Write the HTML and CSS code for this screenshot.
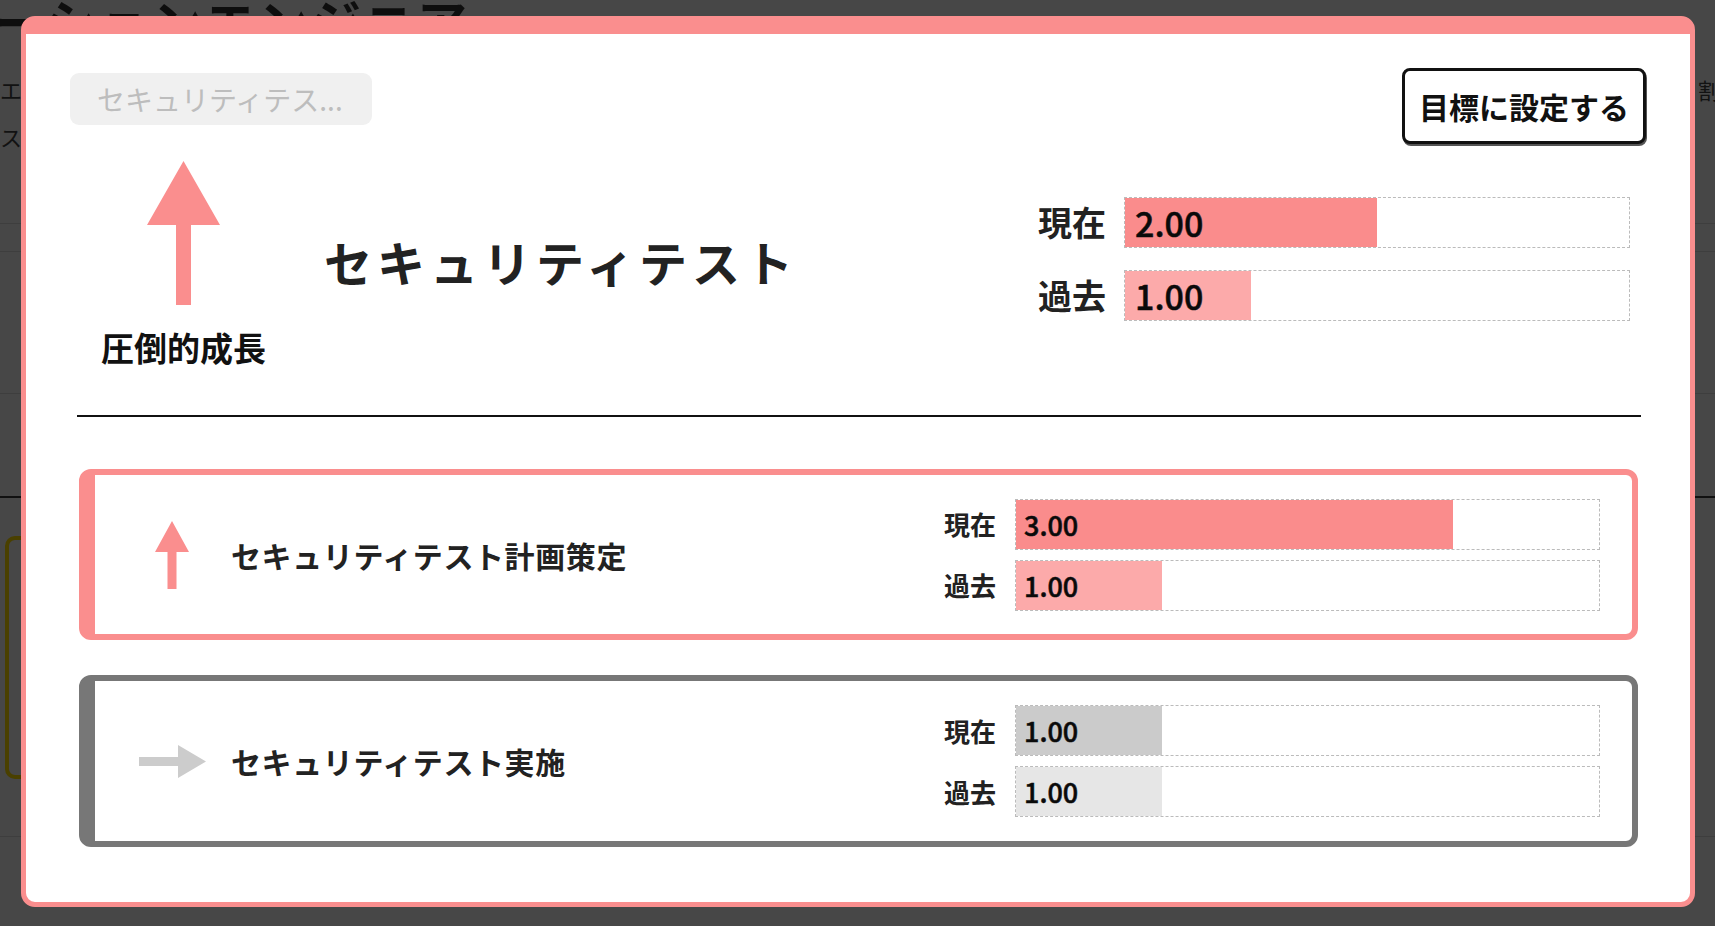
FILE: index.html
```html
<!DOCTYPE html>
<html lang="ja">
<head>
<meta charset="utf-8">
<title>セキュリティテスト</title>
<link rel="stylesheet" href="styles.css">
</head>
<body>
<div class="page">
  <h1 class="page-title">ーションエンジニア</h1>
  <div class="page-meta">
    <div class="meta-row"><span>エ</span><span class="meta-right">割合</span></div>
    <div class="meta-row"><span>ス</span></div>
  </div>
  <div class="band band-a"></div>
  <div class="band band-b"></div>
  <div class="band band-c"></div>
  <div class="band band-d"></div>
  <div class="band band-e"><div class="ghost-card"></div></div>
</div>

<div class="modal">
  <div class="modal-top">
    <div class="pill">セキュリティテス...</div>
    <button class="goal-btn">目標に設定する</button>
  </div>

  <div class="hero">
    <div class="hero-trend">
      <svg class="arrow-big" width="73" height="144" viewBox="0 0 73 144"><path d="M36.5 0L73 64H44V144H29V64H0Z" fill="#fa8e8e"/></svg>
      <div class="trend-label">圧倒的成長</div>
    </div>
    <div class="hero-title">セキュリティテスト</div>
    <div class="hero-bars">
      <div class="bar-label">現在</div>
      <div class="bar"><div class="fill fill-now" style="width:50%">2.00</div></div>
      <div class="bar-label">過去</div>
      <div class="bar"><div class="fill fill-past" style="width:25%">1.00</div></div>
    </div>
  </div>

  <div class="divider"></div>

  <div class="list">
    <div class="card">
      <div class="card-icon">
        <svg width="34" height="68" viewBox="0 0 34 68"><path d="M17 0L34 31H21.5V68H12.5V31H0Z" fill="#fa8e8e"/></svg>
      </div>
      <div class="card-name">セキュリティテスト計画策定</div>
      <div class="card-bars">
        <div class="bar-label">現在</div>
        <div class="bar"><div class="fill fill-now" style="width:75%">3.00</div></div>
        <div class="bar-label">過去</div>
        <div class="bar"><div class="fill fill-past" style="width:25%">1.00</div></div>
      </div>
    </div>

    <div class="card card-flat">
      <div class="card-icon">
        <svg width="67" height="33" viewBox="0 0 67 33"><path d="M0 12H39V0L67 16.5L39 33V21H0Z" fill="#cccccc"/></svg>
      </div>
      <div class="card-name">セキュリティテスト実施</div>
      <div class="card-bars">
        <div class="bar-label">現在</div>
        <div class="bar"><div class="fill fill-gray" style="width:25%">1.00</div></div>
        <div class="bar-label">過去</div>
        <div class="bar"><div class="fill fill-lightgray" style="width:25%">1.00</div></div>
      </div>
    </div>
  </div>
</div>
</body>
</html>
```

FILE: styles.css
```css
html, body {
  margin: 0;
  padding: 0;
}

body {
  width: 1715px;
  height: 926px;
  overflow: hidden;
  background: #474747;
  font-family: "Noto Sans CJK JP", "Noto Sans", sans-serif;
  color: #1a1a1a;
}

/* ---------- dimmed page behind the dialog ---------- */
.page {
  height: 926px;
  overflow: hidden;
}

.page-title {
  margin: -4px 0 0 -6px;
  font-size: 50px;
  line-height: 48px;
  font-weight: bold;
  color: #0e0e0e;
  letter-spacing: 3px;
  white-space: nowrap;
}

.page-meta {
  padding-top: 22px;
  font-size: 22px;
  line-height: 47px;
  color: #121212;
}

.meta-row {
  display: flex;
  justify-content: space-between;
  height: 47px;
}

.meta-right {
  margin-right: -27px;
}

.band {
  border-bottom: 1px solid #3e3e3e;
  box-sizing: border-box;
}

.band-a { height: 64px; }
.band-b { height: 28px; }
.band-c { height: 142px; }
.band-d { height: 104px; border-bottom: 2px solid #111; }
.band-e { height: 339px; padding-top: 38px; }

.ghost-card {
  margin-left: 5px;
  width: 300px;
  height: 243px;
  box-sizing: border-box;
  border: 4px solid #4a4000;
  border-radius: 10px;
}

/* ---------- dialog ---------- */
.modal {
  position: fixed;
  left: 21px;
  top: 16px;
  width: 1674px;
  height: 891px;
  box-sizing: border-box;
  background: #fff;
  border: 5px solid #fa8e8e;
  border-top-width: 18px;
  border-radius: 14px;
  padding: 0 44px;
}

.modal-top {
  display: flex;
  justify-content: space-between;
  align-items: flex-start;
  padding-top: 34px;
}

.pill {
  margin-top: 5px;
  width: 302px;
  height: 52px;
  box-sizing: border-box;
  padding-left: 27px;
  background: #f0f0f0;
  border-radius: 9px;
  color: #bdbdbd;
  font-size: 28px;
  line-height: 52px;
  white-space: nowrap;
}

.goal-btn {
  width: 244px;
  height: 76px;
  box-sizing: border-box;
  margin: 0;
  padding: 0;
  border: 3px solid #111;
  border-radius: 8px;
  background: #fff;
  box-shadow: 1px 2px 0 #555;
  font-family: "Noto Sans CJK JP", sans-serif;
  font-size: 30px;
  font-weight: bold;
  color: #111;
}

.hero {
  display: flex;
  align-items: center;
  margin-top: 17px;
}

.hero-trend {
  width: 227px;
  display: flex;
  flex-direction: column;
  align-items: center;
}

.arrow-big {
  display: block;
}

.trend-label {
  margin-top: 23px;
  font-size: 33px;
  line-height: 38px;
  font-weight: bold;
  color: #111;
}

.hero-title {
  flex: 1;
  margin-left: 27px;
  padding-bottom: 6px;
  font-size: 48px;
  line-height: 1;
  font-weight: bold;
  letter-spacing: 5px;
  color: #222;
}

.hero-bars {
  display: grid;
  grid-template-columns: auto 506px;
  column-gap: 18px;
  row-gap: 22px;
  align-items: center;
  margin-right: 16px;
  padding-bottom: 10px;
}

.hero-bars .bar-label {
  font-size: 34px;
  line-height: 40px;
}

.bar-label {
  font-weight: bold;
  color: #222;
  white-space: nowrap;
}

.bar {
  height: 51px;
  box-sizing: border-box;
  border: 1px dashed #bbb;
  display: flex;
}

.fill {
  height: 100%;
  box-sizing: border-box;
  white-space: nowrap;
  color: #0a0a0a;
  font-weight: 500;
  -webkit-text-stroke: 0.5px #0a0a0a;
}

.hero-bars .fill {
  padding-left: 10px;
  font-size: 34px;
  line-height: 49px;
}

.fill-now { background: #fa8c8c; }
.fill-past { background: #fcaaaa; }
.fill-gray { background: #cbcbcb; }
.fill-lightgray { background: #e6e6e6; }

.divider {
  height: 2px;
  background: #111;
  margin: 49px 5px 0 7px;
}

.list {
  display: flex;
  flex-direction: column;
  gap: 35px;
  margin: 52px 8px 0 9px;
}

.card {
  height: 171px;
  box-sizing: border-box;
  border: 6px solid #fa8e8e;
  border-left-width: 16px;
  border-radius: 12px;
  display: flex;
  align-items: center;
  padding: 0 32px 0 40px;
}

.card-flat {
  height: 172px;
  border-color: #777;
}

.card-icon {
  width: 74px;
  display: flex;
  justify-content: center;
  align-items: center;
}

.card-icon svg {
  display: block;
}

.card-name {
  flex: 1;
  margin-left: 22px;
  font-size: 30px;
  line-height: 40px;
  font-weight: bold;
  letter-spacing: 0.6px;
  color: #222;
  white-space: nowrap;
}

.card-bars {
  display: grid;
  grid-template-columns: auto 585px;
  column-gap: 19px;
  row-gap: 10px;
  align-items: center;
}

.card-bars .bar-label {
  font-size: 26px;
  line-height: 34px;
}

.card-bars .fill {
  padding-left: 8px;
  font-size: 27px;
  line-height: 49px;
}
```
